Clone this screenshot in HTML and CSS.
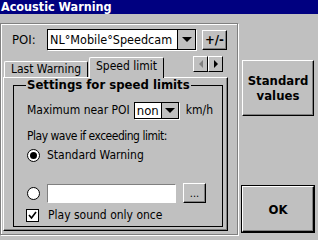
FILE: index.html
```html
<!DOCTYPE html>
<html lang="en">
<head>
    <meta charset="UTF-8">
    <title>Acoustic Warning</title>
    <link rel="stylesheet" href="styles.css">
</head>
<body>
    <div class="titlebar">Acoustic Warning</div>
    <div class="main">
        <div class="frame">
            <div class="poi-row">
                <span class="poi-label">POI:</span>
                <div class="combo poi-combo">
                    <span class="combo-text">NL°Mobile°Speedcam</span>
                    <span class="drop"><span class="tri"></span></span>
                </div>
                <div class="btn plusminus">+/-</div>
            </div>
            <div class="tabs">
                <div class="tab">Last Warning</div>
                <div class="tab active">Speed limit</div>
                <div class="scroller">
                    <span class="arrow off"><span class="tri-left"></span></span>
                    <span class="arrow"><span class="tri-right"></span></span>
                </div>
            </div>
            <div class="panel">
                <fieldset class="group">
                    <legend>Settings for speed limits</legend>
                    <div class="row max-row">
                        <span>Maximum near POI</span>
                        <div class="combo small-combo">
                            <span class="combo-text">non</span>
                            <span class="drop"><span class="tri"></span></span>
                        </div>
                        <span>km/h</span>
                    </div>
                    <div class="row wave-row">Play wave if exceeding limit:</div>
                    <div class="row radio-row">
                        <span class="radio on"></span>
                        <span>Standard Warning</span>
                    </div>
                    <div class="row radio-row file-row">
                        <span class="radio"></span>
                        <span class="field"></span>
                        <span class="btn dots">...</span>
                    </div>
                    <div class="row check-row">
                        <span class="check">
                            <svg width="9" height="9" viewBox="0 0 9 9"><path d="M1 4 L3.5 7 L8 1" fill="none" stroke="#000" stroke-width="1.6"/></svg>
                        </span>
                        <span>Play sound only once</span>
                    </div>
                </fieldset>
            </div>
        </div>
        <div class="side">
            <div class="btn big">Standard<br>values</div>
            <div class="btn big ok">OK</div>
        </div>
    </div>
</body>
</html>
```

FILE: styles.css
```css
body {
    margin: 0;
    width: 318px;
    height: 240px;
    overflow: hidden;
    background: #c0c0c0;
    font-family: "DejaVu Sans", sans-serif;
    font-stretch: condensed;
    font-size: 12px;
    color: #000;
}

.titlebar {
    height: 14px;
    line-height: 14px;
    background: #000080;
    color: #fff;
    font-weight: bold;
    font-size: 12.5px;
    padding-left: 1px;
    overflow: hidden;
}

.main {
    display: flex;
    padding-top: 9px;
}

.frame {
    width: 236px;
    height: 210px;
    border: 1px solid #808080;
    box-shadow: 1px 1px 0 #fff, inset 1px 1px 0 #fff;
}

.poi-row {
    display: flex;
    align-items: center;
    height: 21px;
    margin-top: 5px;
    padding-left: 11px;
}

.poi-label {
    width: 35px;
    font-size: 13px;
}

.combo {
    display: flex;
    background: #fff;
    border: 1px solid #000;
    box-shadow: 1px 1px 0 #fff;
}

.combo-text {
    flex: 1;
    padding-left: 2px;
    white-space: nowrap;
    overflow: hidden;
}

.poi-combo {
    width: 147px;
    height: 19px;
    line-height: 19px;
    font-size: 12.5px;
}

.drop {
    width: 17px;
    background: #c0c0c0;
    border-left: 1px solid #000;
    display: flex;
    align-items: center;
    justify-content: center;
}

.tri {
    width: 0;
    height: 0;
    border-left: 5px solid transparent;
    border-right: 5px solid transparent;
    border-top: 5px solid #000;
}

.btn {
    background: #c0c0c0;
    border: 1px solid;
    border-color: #fff #000 #000 #fff;
    box-shadow: inset -1px -1px 0 #808080;
    display: flex;
    align-items: center;
    justify-content: center;
    text-align: center;
}

.plusminus {
    width: 23px;
    height: 18px;
    margin-left: 6px;
    font-weight: bold;
    font-size: 13px;
}

.tabs {
    display: flex;
    align-items: flex-end;
    height: 21px;
    margin-top: 6px;
    padding-left: 3px;
}

.tab {
    height: 15px;
    line-height: 15px;
    width: 82px;
    text-align: center;
    border: 1px solid;
    border-bottom: none;
    border-color: #fff #000 #000 #fff;
    border-radius: 2px 2px 0 0;
}

.tab.active {
    width: 73px;
    height: 20px;
    line-height: 17px;
    margin-left: 1px;
    margin-bottom: -1px;
    background: #c0c0c0;
    position: relative;
    z-index: 1;
}

.scroller {
    display: flex;
    margin-left: auto;
    margin-right: 14px;
    margin-bottom: 5px;
}

.arrow {
    width: 13px;
    height: 14px;
    border: 1px solid;
    border-color: #fff #000 #000 #fff;
    display: flex;
    align-items: center;
    justify-content: center;
}

.tri-left,
.tri-right {
    width: 0;
    height: 0;
    border-top: 4px solid transparent;
    border-bottom: 4px solid transparent;
}

.tri-left {
    border-right: 4px solid #808080;
}

.tri-right {
    border-left: 4px solid #000;
}

.panel {
    margin-left: 2px;
    width: 225px;
    height: 154px;
    border: 1px solid;
    border-color: #fff #000 #000 #fff;
    box-shadow: inset -1px -1px 0 #808080;
    padding: 0 4px 0 9px;
    box-sizing: border-box;
}

.group {
    margin: 0;
    padding: 0 0 0 13px;
    width: 210px;
    height: 149px;
    box-sizing: border-box;
    border: 1px solid #000;
}

.group legend {
    font-weight: bold;
    font-size: 13px;
    line-height: 14px;
    padding: 0 1px;
    margin-left: -1px;
}

.row {
    display: flex;
    align-items: center;
    gap: 6px;
    height: 18px;
    white-space: nowrap;
}

.max-row {
    margin-top: 9px;
}

.wave-row {
    margin-top: 8px;
    letter-spacing: -0.5px;
}

.small-combo {
    width: 43px;
    height: 15px;
    line-height: 15px;
    margin-left: -2px;
    margin-right: 1px;
    font-size: 13px;
}

.small-combo .drop {
    width: 16px;
}

.radio {
    width: 11px;
    height: 11px;
    border: 1px solid #000;
    border-radius: 50%;
    background: #fff;
    position: relative;
}

.radio.on::after {
    content: "";
    position: absolute;
    left: 2px;
    top: 2px;
    width: 7px;
    height: 7px;
    border-radius: 50%;
    background: #000;
}

.radio-row {
    margin-top: 1px;
    gap: 7px;
}

.file-row {
    height: 20px;
    margin-top: 19px;
}

.field {
    width: 127px;
    height: 17px;
    background: #fff;
    border: 1px solid;
    border-color: #808080 #fff #fff #808080;
}

.dots {
    width: 21px;
    height: 18px;
    font-size: 11px;
}

.check-row {
    margin-top: 3px;
    margin-left: -1px;
    gap: 9px;
}

.check {
    width: 11px;
    height: 11px;
    border: 1px solid #000;
    background: #fff;
    display: flex;
    align-items: center;
    justify-content: center;
}

.side {
    display: flex;
    flex-direction: column;
    justify-content: space-between;
    margin-left: 4px;
    padding: 37px 0 3px;
}

.big {
    width: 70px;
    height: 54px;
    font-weight: bold;
    font-size: 13px;
}

.ok {
    height: 44px;
    box-shadow: inset -1px -1px 0 #808080, 0 0 0 1px #000;
}
```
